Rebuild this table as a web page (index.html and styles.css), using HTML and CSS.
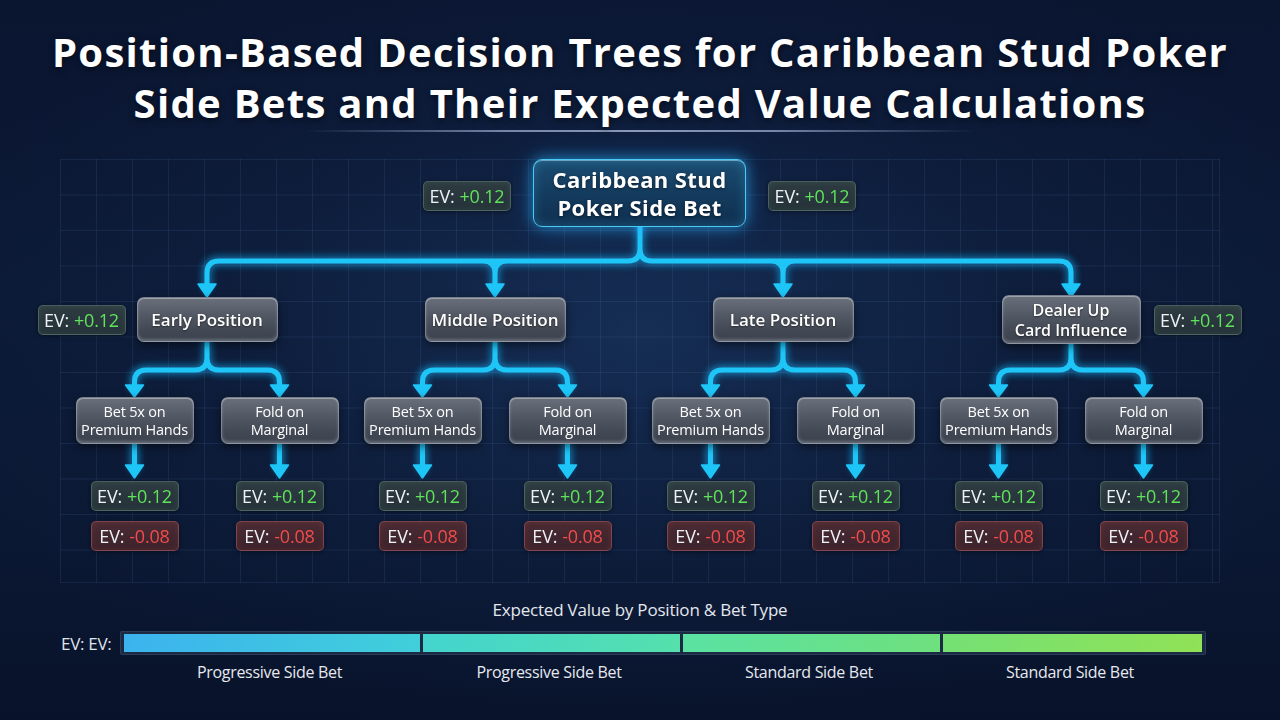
FILE: index.html
```html
<!DOCTYPE html>
<html lang="en">
<head>
<meta charset="utf-8">
<title>Position-Based Decision Trees</title>
<link rel="stylesheet" href="styles.css">
</head>
<body>
<header class="header">
  <h1 class="title">Position-Based Decision Trees for Caribbean Stud Poker<br>Side Bets and Their Expected Value Calculations</h1>
  <div class="rule"></div>
</header>

<section class="canvas">
  <svg class="links" width="1160" height="424" viewBox="60 159 1160 424" xmlns="http://www.w3.org/2000/svg">
    <defs>
      <filter id="glow" x="-10%" y="-10%" width="120%" height="120%">
        <feGaussianBlur stdDeviation="3"/>
      </filter>
    </defs>
    <g id="wires" fill="none" stroke-linecap="round" stroke-linejoin="round">
      <g class="halo" filter="url(#glow)">
        <path d="M640 227 V249 Q640 261 628 261 H219 Q207 261 207 273 V286 M640 249 Q640 261 652 261 H1059 Q1071 261 1071 273 V286 M483 261 Q495 261 495 273 V286 M507 261 Q495 261 495 273 M771 261 Q783 261 783 273 V286 M795 261 Q783 261 783 273"/>
        <path d="M207 342 V358 Q207 370 195 370 H146.5 Q134.5 370 134.5 382 V387 M207 358 Q207 370 219 370 H267.5 Q279.5 370 279.5 382 V387
                 M495 342 V358 Q495 370 483 370 H434.5 Q422.5 370 422.5 382 V387 M495 358 Q495 370 507 370 H555.5 Q567.5 370 567.5 382 V387
                 M783 342 V358 Q783 370 771 370 H722.5 Q710.5 370 710.5 382 V387 M783 358 Q783 370 795 370 H843.5 Q855.5 370 855.5 382 V387
                 M1071 344 V358 Q1071 370 1059 370 H1010.5 Q998.5 370 998.5 382 V387 M1071 358 Q1071 370 1083 370 H1131.5 Q1143.5 370 1143.5 382 V387"/>
        <path d="M134.5 444 V468 M279.5 444 V468 M422.5 444 V468 M567.5 444 V468 M710.5 444 V468 M855.5 444 V468 M998.5 444 V468 M1143.5 444 V468"/>
      </g>
      <g class="wire">
        <path d="M640 227 V249 Q640 261 628 261 H219 Q207 261 207 273 V286 M640 249 Q640 261 652 261 H1059 Q1071 261 1071 273 V286 M483 261 Q495 261 495 273 V286 M507 261 Q495 261 495 273 M771 261 Q783 261 783 273 V286 M795 261 Q783 261 783 273"/>
        <path d="M207 342 V358 Q207 370 195 370 H146.5 Q134.5 370 134.5 382 V387 M207 358 Q207 370 219 370 H267.5 Q279.5 370 279.5 382 V387
                 M495 342 V358 Q495 370 483 370 H434.5 Q422.5 370 422.5 382 V387 M495 358 Q495 370 507 370 H555.5 Q567.5 370 567.5 382 V387
                 M783 342 V358 Q783 370 771 370 H722.5 Q710.5 370 710.5 382 V387 M783 358 Q783 370 795 370 H843.5 Q855.5 370 855.5 382 V387
                 M1071 344 V358 Q1071 370 1059 370 H1010.5 Q998.5 370 998.5 382 V387 M1071 358 Q1071 370 1083 370 H1131.5 Q1143.5 370 1143.5 382 V387"/>
        <path d="M134.5 444 V468 M279.5 444 V468 M422.5 444 V468 M567.5 444 V468 M710.5 444 V468 M855.5 444 V468 M998.5 444 V468 M1143.5 444 V468"/>
      </g>
    </g>
    <g class="heads">
      <polygon points="198,284 216,284 207,297"/>
      <polygon points="486,284 504,284 495,297"/>
      <polygon points="774,284 792,284 783,297"/>
      <polygon points="1062,284 1080,284 1071,297"/>
      <polygon points="125.5,385 143.5,385 134.5,397"/>
      <polygon points="270.5,385 288.5,385 279.5,397"/>
      <polygon points="413.5,385 431.5,385 422.5,397"/>
      <polygon points="558.5,385 576.5,385 567.5,397"/>
      <polygon points="701.5,385 719.5,385 710.5,397"/>
      <polygon points="846.5,385 864.5,385 855.5,397"/>
      <polygon points="989.5,385 1007.5,385 998.5,397"/>
      <polygon points="1134.5,385 1152.5,385 1143.5,397"/>
      <polygon points="125.5,465 143.5,465 134.5,478"/>
      <polygon points="270.5,465 288.5,465 279.5,478"/>
      <polygon points="413.5,465 431.5,465 422.5,478"/>
      <polygon points="558.5,465 576.5,465 567.5,478"/>
      <polygon points="701.5,465 719.5,465 710.5,478"/>
      <polygon points="846.5,465 864.5,465 855.5,478"/>
      <polygon points="989.5,465 1007.5,465 998.5,478"/>
      <polygon points="1134.5,465 1152.5,465 1143.5,478"/>
    </g>
  </svg>

  <div class="root-row">
    <span class="ev pos top">EV: <b>+0.12</b></span>
    <div class="root">Caribbean Stud<br>Poker Side Bet</div>
    <span class="ev pos top">EV: <b>+0.12</b></span>
  </div>

  <div class="branches">
    <div class="branch">
      <div class="l2-slot">
        <div class="node l2">Early Position<span class="ev pos side side-left">EV: <b>+0.12</b></span></div>
      </div>
      <div class="kids">
        <div class="kid">
          <div class="node l3">Bet 5x on<br>Premium Hands</div>
          <span class="ev pos leaf">EV: <b>+0.12</b></span>
          <span class="ev neg leaf">EV: <b>-0.08</b></span>
        </div>
        <div class="kid">
          <div class="node l3">Fold on<br>Marginal</div>
          <span class="ev pos leaf">EV: <b>+0.12</b></span>
          <span class="ev neg leaf">EV: <b>-0.08</b></span>
        </div>
      </div>
    </div>

    <div class="branch">
      <div class="l2-slot">
        <div class="node l2">Middle Position</div>
      </div>
      <div class="kids">
        <div class="kid">
          <div class="node l3">Bet 5x on<br>Premium Hands</div>
          <span class="ev pos leaf">EV: <b>+0.12</b></span>
          <span class="ev neg leaf">EV: <b>-0.08</b></span>
        </div>
        <div class="kid">
          <div class="node l3">Fold on<br>Marginal</div>
          <span class="ev pos leaf">EV: <b>+0.12</b></span>
          <span class="ev neg leaf">EV: <b>-0.08</b></span>
        </div>
      </div>
    </div>

    <div class="branch">
      <div class="l2-slot">
        <div class="node l2">Late Position</div>
      </div>
      <div class="kids">
        <div class="kid">
          <div class="node l3">Bet 5x on<br>Premium Hands</div>
          <span class="ev pos leaf">EV: <b>+0.12</b></span>
          <span class="ev neg leaf">EV: <b>-0.08</b></span>
        </div>
        <div class="kid">
          <div class="node l3">Fold on<br>Marginal</div>
          <span class="ev pos leaf">EV: <b>+0.12</b></span>
          <span class="ev neg leaf">EV: <b>-0.08</b></span>
        </div>
      </div>
    </div>

    <div class="branch">
      <div class="l2-slot">
        <div class="node l2 tall">Dealer Up<br>Card Influence<span class="ev pos side side-right">EV: <b>+0.12</b></span></div>
      </div>
      <div class="kids">
        <div class="kid">
          <div class="node l3">Bet 5x on<br>Premium Hands</div>
          <span class="ev pos leaf">EV: <b>+0.12</b></span>
          <span class="ev neg leaf">EV: <b>-0.08</b></span>
        </div>
        <div class="kid">
          <div class="node l3">Fold on<br>Marginal</div>
          <span class="ev pos leaf">EV: <b>+0.12</b></span>
          <span class="ev neg leaf">EV: <b>-0.08</b></span>
        </div>
      </div>
    </div>
  </div>
</section>

<section class="legend">
  <div class="legend-title">Expected Value by Position &amp; Bet Type</div>
  <div class="bar-row">
    <span class="bar-label">EV: EV:</span>
    <div class="bar">
      <div class="seg seg1"></div>
      <div class="seg seg2"></div>
      <div class="seg seg3"></div>
      <div class="seg seg4"></div>
    </div>
  </div>
  <div class="seg-labels">
    <span>Progressive Side Bet</span>
    <span>Progressive Side Bet</span>
    <span>Standard Side Bet</span>
    <span>Standard Side Bet</span>
  </div>
</section>
</body>
</html>
```

FILE: styles.css
```css
* { box-sizing: border-box; }

html, body {
  margin: 0;
  padding: 0;
}

body {
  width: 1280px;
  height: 720px;
  overflow: hidden;
  font-family: "Open Sans", "Noto Sans", sans-serif;
  color: #ffffff;
  background:
    radial-gradient(ellipse 720px 420px at 50% 46%, rgba(30, 62, 110, 0.55) 0%, rgba(20, 42, 80, 0.25) 55%, rgba(10, 20, 40, 0) 100%),
    linear-gradient(180deg, #0a1530 0%, #0c1a36 40%, #0b1833 75%, #08122a 100%);
}

/* ---------- header ---------- */
.header {
  padding-top: 26px;
  text-align: center;
}

.title {
  margin: 0;
  font-family: "Open Sans", sans-serif;
  font-weight: 700;
  font-size: 40px;
  line-height: 51px;
  letter-spacing: 1.3px;
  color: #ffffff;
  text-shadow: 0 2px 6px rgba(0, 0, 0, 0.55);
}

.rule {
  width: 670px;
  height: 2px;
  margin: 2px auto 0;
  background: linear-gradient(90deg, rgba(140, 160, 200, 0) 0%, rgba(150, 170, 205, 0.75) 30%, rgba(170, 185, 215, 0.8) 50%, rgba(150, 170, 205, 0.75) 70%, rgba(140, 160, 200, 0) 100%);
}

/* ---------- diagram canvas ---------- */
.canvas {
  position: relative;
  width: 1160px;
  height: 424px;
  margin: 27px auto 0;
  background-image:
    linear-gradient(rgba(90, 130, 190, 0.14) 1px, transparent 1px),
    linear-gradient(90deg, rgba(90, 130, 190, 0.14) 1px, transparent 1px);
  background-size: 36px 35.5px;
  background-position: 0 0;
  border-right: 1px solid rgba(90, 130, 190, 0.14);
  border-bottom: 1px solid rgba(90, 130, 190, 0.14);
}

.links {
  position: absolute;
  left: 0;
  top: 0;
  overflow: visible;
}

.links .halo path {
  stroke: #19b8ff;
  stroke-width: 11;
  opacity: 0.45;
}

.links .wire path {
  stroke: #1ec6f8;
  stroke-width: 5;
}

.links .heads polygon {
  fill: #1ec6f8;
  stroke: #1ec6f8;
  stroke-width: 1.5;
  stroke-linejoin: round;
}

.root-row {
  position: relative;
  z-index: 1;
  display: flex;
  justify-content: center;
  align-items: center;
  gap: 22px;
  height: 68px;
}

.root {
  width: 213px;
  height: 68px;
  display: flex;
  align-items: center;
  justify-content: center;
  text-align: center;
  font-weight: 700;
  font-size: 22px;
  line-height: 28px;
  letter-spacing: 0.4px;
  color: #ffffff;
  border-radius: 9px;
  border: 1.5px solid #4cc9f2;
  background: linear-gradient(180deg, #1c4d72 0%, #143c5f 50%, #0f2f4f 100%);
  box-shadow:
    0 0 14px rgba(40, 180, 255, 0.6),
    0 0 28px rgba(40, 170, 255, 0.25),
    inset 0 0 12px rgba(70, 200, 255, 0.28),
    inset 0 1px 0 rgba(200, 240, 255, 0.5);
  text-shadow: 0 1px 3px rgba(0, 0, 0, 0.5);
}

/* EV pills */
.ev {
  display: inline-flex;
  align-items: center;
  justify-content: center;
  width: 88px;
  height: 30px;
  font-size: 18px;
  line-height: 1;
  color: #eef2f6;
  border-radius: 5px;
  white-space: nowrap;
  letter-spacing: -0.2px;
}

.ev b {
  font-weight: 400;
  margin-left: 5px;
}

.ev.pos {
  background: linear-gradient(180deg, #2f3b42 0%, #26323a 100%);
  border: 1px solid rgba(150, 190, 165, 0.32);
  box-shadow: inset 0 0 6px rgba(90, 200, 110, 0.12), 0 1px 4px rgba(0, 0, 0, 0.45);
}

.ev.pos b { color: #5ee35a; }

.ev.neg {
  background: linear-gradient(180deg, #4a2b33 0%, #3c232c 100%);
  border: 1px solid rgba(220, 120, 125, 0.38);
  box-shadow: inset 0 0 6px rgba(230, 80, 80, 0.15), 0 1px 4px rgba(0, 0, 0, 0.45);
}

.ev.neg b { color: #f24b4b; }

.ev.top {
  margin-top: 6px;
}

.ev.side {
  position: absolute;
  top: 50%;
  margin-top: -15px;
  font-weight: 400;
  text-shadow: none;
}

.side-left { right: calc(100% + 12px); }
.side-right { left: calc(100% + 14px); }

.ev.leaf + .ev.leaf {
  margin-top: 10px;
}

/* branches */
.branches {
  position: relative;
  z-index: 1;
  display: grid;
  grid-template-columns: repeat(4, 288px);
  padding-left: 3px;
  margin-top: 70px;
}

.branch {
  display: flex;
  flex-direction: column;
  align-items: center;
}

.l2-slot {
  height: 45px;
  display: flex;
  align-items: center;
}

.node {
  position: relative;
  display: flex;
  align-items: center;
  justify-content: center;
  text-align: center;
  color: #ffffff;
  border-radius: 7px;
  border: 1px solid rgba(190, 200, 215, 0.45);
  background: linear-gradient(180deg, #6a707b 0%, #535964 40%, #434954 75%, #3c424d 100%);
  box-shadow:
    inset 0 1px 0 rgba(255, 255, 255, 0.35),
    inset 0 -2px 3px rgba(220, 230, 245, 0.25),
    0 3px 8px rgba(0, 0, 0, 0.5);
}

.node.l2 {
  width: 141px;
  height: 45px;
  font-weight: 600;
  font-size: 17px;
  line-height: 22px;
  text-shadow: 0 1px 2px rgba(0, 0, 0, 0.5);
}

.node.l2.tall {
  width: 139px;
  height: 49px;
  font-size: 16px;
  line-height: 20px;
}

.kids {
  display: flex;
  gap: 27px;
  margin-top: 55px;
}

.kid {
  width: 118px;
  display: flex;
  flex-direction: column;
  align-items: center;
}

.node.l3 {
  width: 118px;
  height: 47px;
  font-size: 14.5px;
  line-height: 18px;
  letter-spacing: -0.2px;
  margin-bottom: 37px;
}

/* ---------- legend ---------- */
.legend {
  margin-top: 17px;
}

.legend-title {
  text-align: center;
  font-size: 17px;
  line-height: 20px;
  color: #e3e7ee;
  letter-spacing: -0.2px;
}

.bar-row {
  display: flex;
  align-items: center;
  margin-top: 11px;
  padding-left: 61px;
  height: 24px;
}

.bar-label {
  width: 59px;
  font-size: 17px;
  color: #dfe3ea;
  letter-spacing: -0.3px;
}

.bar {
  display: grid;
  grid-template-columns: 296px 257px 257px 259px;
  gap: 3px;
  padding: 2px 3px;
  height: 24px;
  background: rgba(30, 45, 70, 0.85);
  border: 1px solid rgba(60, 80, 110, 0.5);
  border-radius: 2px;
}

.seg { height: 18px; }
.seg1 { background: linear-gradient(90deg, #3cb3ee 0%, #40cfda 100%); }
.seg2 { background: linear-gradient(90deg, #43d4cf 0%, #55e0ac 100%); }
.seg3 { background: linear-gradient(90deg, #5ae2a3 0%, #6fe07d 100%); }
.seg4 { background: linear-gradient(90deg, #74e074 0%, #90e256 100%); }

.seg-labels {
  display: grid;
  grid-template-columns: 299px 260px 260px 262px;
  padding-left: 120px;
  margin-top: 7px;
  font-size: 16px;
  line-height: 20px;
  color: #e6e9ef;
  letter-spacing: -0.3px;
}

.seg-labels span { text-align: center; }
```
